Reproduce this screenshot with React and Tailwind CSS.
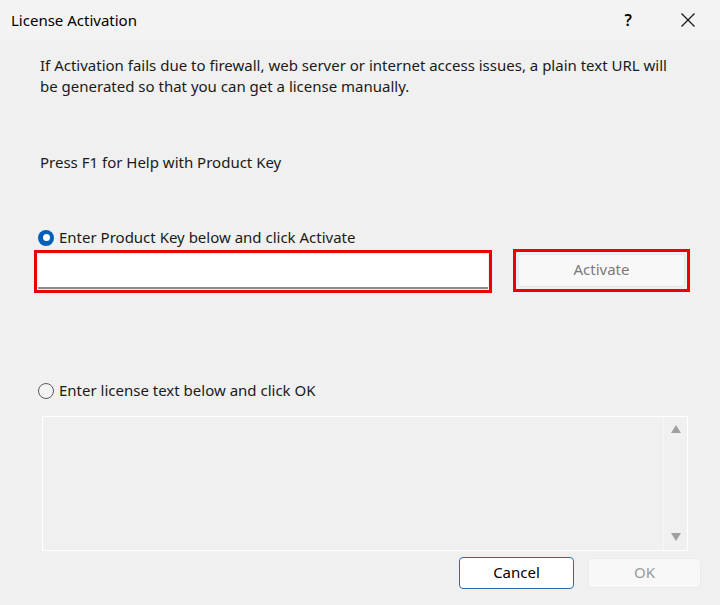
import React from "react";

function CloseIcon() {
  return (
    <svg width="16" height="16" viewBox="0 0 16 16" fill="none">
      <path d="M1.5 1.5 L14.5 14.5 M14.5 1.5 L1.5 14.5" stroke="#1a1a1a" strokeWidth="1.3" />
    </svg>
  );
}

function Arrow({ down }) {
  return (
    <svg width="12" height="10" viewBox="0 0 12 10">
      {down ? (
        <path d="M1 1 H11 L6 9 Z" fill="#a0a0a0" />
      ) : (
        <path d="M1 9 H11 L6 1 Z" fill="#a0a0a0" />
      )}
    </svg>
  );
}

export default function App() {
  return (
    <div
      className="w-[720px] h-[605px] bg-[#f0f0f0] flex flex-col text-[15px] text-[#1a1a1a] overflow-hidden"
      style={{ fontFamily: '"Noto Sans", "Segoe UI", sans-serif' }}
    >
      {/* title bar */}
      <div className="h-[40px] bg-[#f3f3f3] flex items-center shrink-0">
        <div className="pl-[11px] flex-1 text-[15px] text-black">License Activation</div>
        <div className="mr-[48px] text-[16px] font-semibold text-black">?</div>
        <div className="mr-[24px] flex justify-center">
          <CloseIcon />
        </div>
      </div>

      {/* body */}
      <div className="flex flex-col pl-[40px] pr-[30px]">
        <p className="mt-[15px] leading-[21px] max-w-[632px]">
          If Activation fails due to firewall, web server or internet access issues, a plain text URL will be generated so that you can get a license manually.
        </p>
        <p className="mt-[55px] leading-[21px]">Press F1 for Help with Product Key</p>

        {/* radio 1 */}
        <div className="mt-[54px] -ml-[2px] flex items-center gap-[5px] leading-[21px]">
          <span className="w-[16px] h-[16px] rounded-full bg-[#005fb8] flex items-center justify-center">
            <span className="w-[7px] h-[7px] rounded-full bg-white" />
          </span>
          <span>Enter Product Key below and click Activate</span>
        </div>

        <div className="mt-[2px] -ml-[6px] flex items-start">
          <div className="w-[458px] h-[43px] border-[3px] border-[#ec0000] p-[1px]">
            <div className="w-full h-full bg-white border-b-[2px] border-[#8a8a8a]" />
          </div>
          <div className="ml-[21px] -mt-[1px] w-[177px] h-[43px] border-[3px] border-[#ec0000] p-[2px]">
            <div className="w-full h-full bg-[#f8f8f8] border border-[#e5e5e5] rounded-[3px] flex items-center justify-center text-[#7a7a7a] text-[15px] pb-[2px]">
              Activate
            </div>
          </div>
        </div>

        {/* radio 2 */}
        <div className="mt-[87px] -ml-[2px] flex items-center gap-[5px] leading-[21px]">
          <span className="w-[16px] h-[16px] rounded-full border border-[#5a5a5a] bg-[#f3f3f3]" />
          <span>Enter license text below and click OK</span>
        </div>

        {/* text area */}
        <div className="mt-[15px] ml-[2px] w-[646px] h-[135px] border border-white flex">
          <div className="flex-1" />
          <div className="w-[24px] flex flex-col items-center justify-between pt-[7px] pb-[8px] border-l border-[#f7f7f7]">
            <Arrow />
            <Arrow down />
          </div>
        </div>

        {/* buttons */}
        <div className="mt-[6px] flex justify-end gap-[14px] -mr-[11px]">
          <div className="w-[115px] h-[32px] bg-white border-[1.5px] border-[#2c6cb0] rounded-[4px] flex items-center justify-center text-[15px] text-black pb-[2px]">
            Cancel
          </div>
          <div className="w-[113px] h-[30px] mt-[1px] bg-[#f8f8f8] border border-[#ebebeb] rounded-[4px] flex items-center justify-center text-[15px] text-[#9a9a9a] pb-[2px]">
            OK
          </div>
        </div>
      </div>
    </div>
  );
}
